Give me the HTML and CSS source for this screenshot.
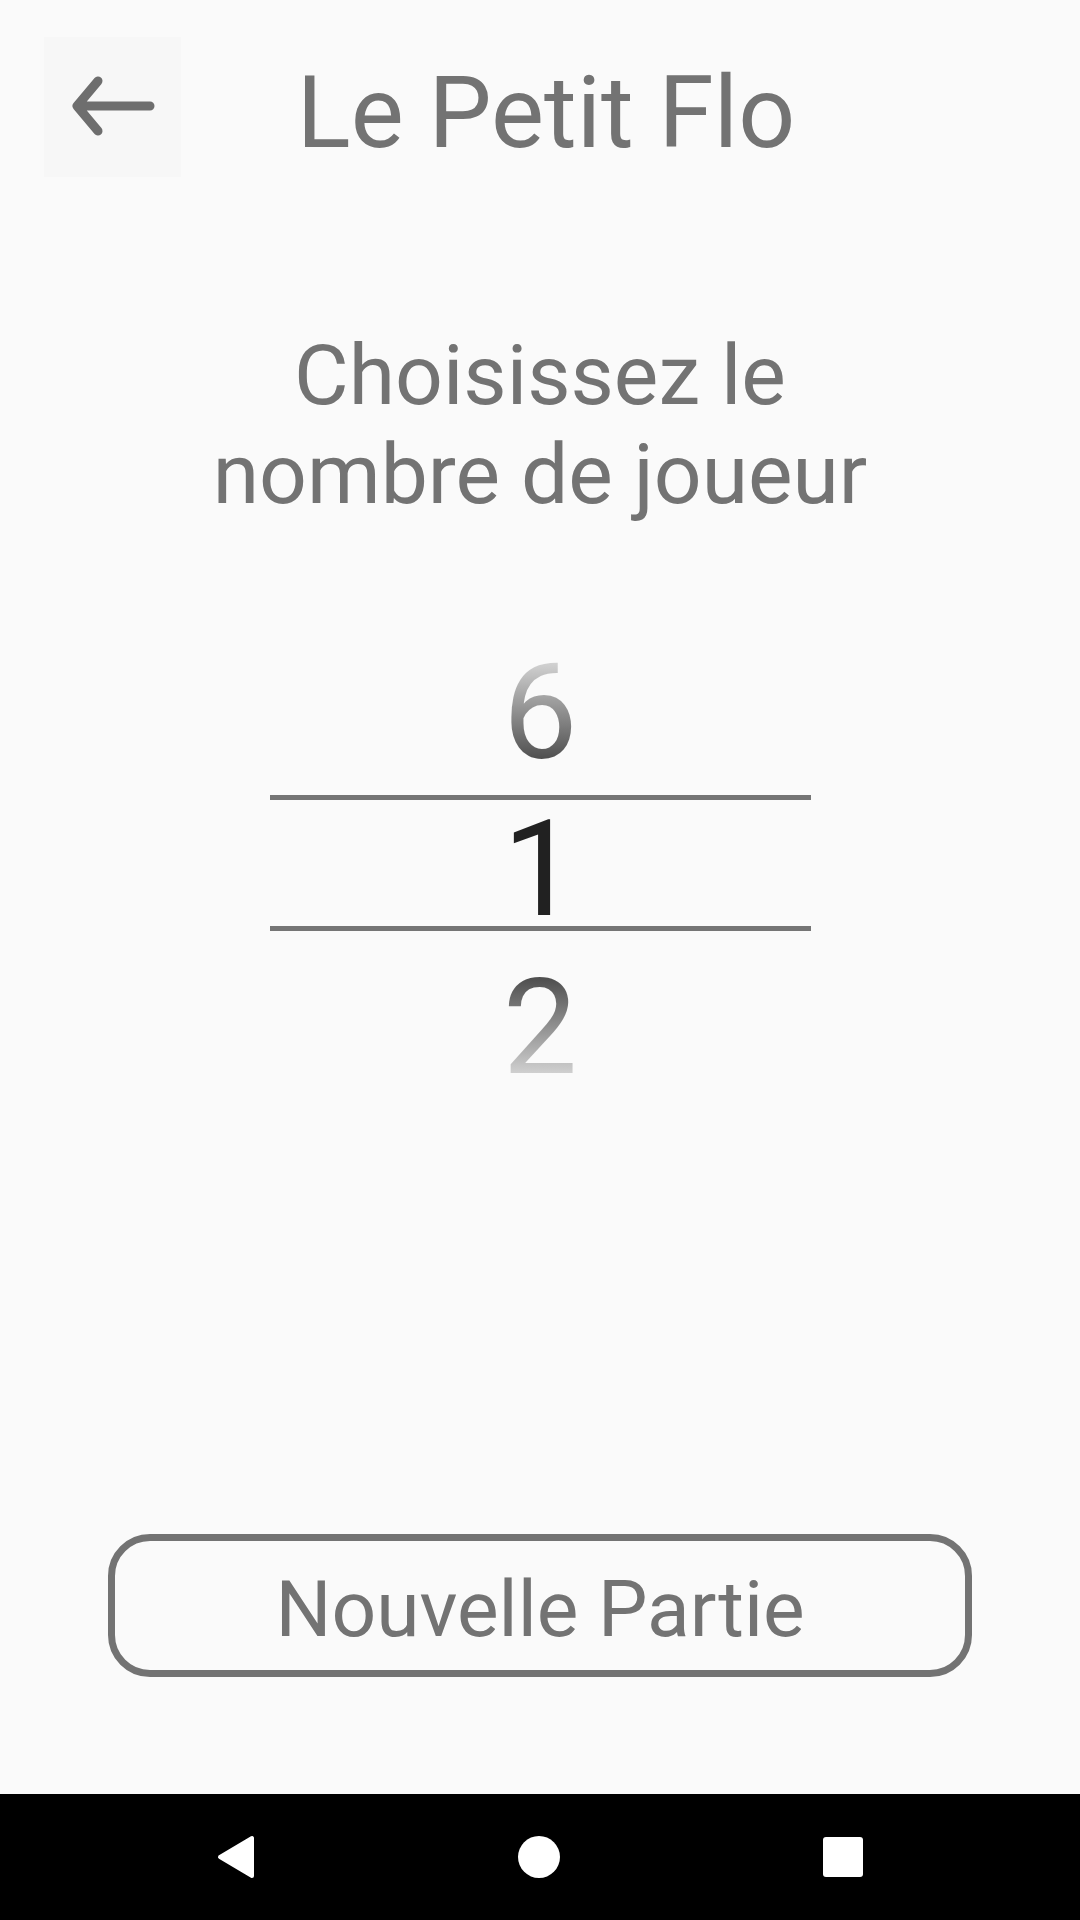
FILE: index.html
```html
<!DOCTYPE html>
<html lang="fr">
<head>
<meta charset="utf-8">
<title>Le Petit Flo</title>
<link rel="stylesheet" href="styles.css">
</head>
<body>
<div class="screen">
  <header class="toolbar">
    <button class="back" aria-label="Retour">
      <svg width="137" height="140" viewBox="0 0 137 140">
        <path d="M54 44 L33 69 L54 94 M33 69 H106" fill="none" stroke="#6e6e6e" stroke-width="9" stroke-linecap="round" stroke-linejoin="round"/>
      </svg>
    </button>
    <h1 class="title">Le Petit Flo</h1>
  </header>

  <main class="content">
    <p class="prompt">Choisissez le<br>nombre de joueur</p>

    <div class="picker">
      <div class="pick pick-prev"><span class="fade fade-top">6</span></div>
      <div class="divider"></div>
      <div class="pick pick-current">1</div>
      <div class="divider"></div>
      <div class="pick pick-next"><span class="fade fade-bottom">2</span></div>
    </div>

    <button class="new-game">Nouvelle Partie</button>
  </main>

  <nav class="navbar">
    <svg class="nav-back" width="38" height="44" viewBox="0 0 38 44">
      <polygon points="35,3 35,41 3,22" fill="#fff" stroke="#fff" stroke-width="4" stroke-linejoin="round"/>
    </svg>
    <span class="nav-home"></span>
    <span class="nav-recent"></span>
  </nav>
</div>
</body>
</html>
```

FILE: styles.css
```css
html, body {
  margin: 0;
  padding: 0;
}

body {
  background: #fafafa;
  font-family: Roboto, "Noto Sans", "Liberation Sans", sans-serif;
  color: #737373;
}

.screen {
  width: 1080px;
  height: 1920px;
  display: flex;
  flex-direction: column;
}

.toolbar {
  display: flex;
  align-items: center;
  padding: 37px 0 0 44px;
}

.back {
  width: 137px;
  height: 140px;
  padding: 0;
  border: none;
  background: #f7f7f7;
  display: flex;
  align-items: center;
  justify-content: flex-start;
}

.title {
  flex: 1;
  margin: 0 181px 0 0;
  padding: 12px 0 0 12px;
  text-align: center;
  font-weight: 400;
  font-size: 100px;
  line-height: 100px;
  color: #737373;
}

.content {
  flex: 1;
  display: flex;
  flex-direction: column;
  align-items: center;
}

.prompt {
  margin: 149px 0 0;
  text-align: center;
  font-size: 84px;
  line-height: 99px;
  color: #737373;
}

.picker {
  margin-top: 132px;
  width: 541px;
  display: flex;
  flex-direction: column;
  align-items: stretch;
  text-align: center;
  font-size: 133px;
  line-height: 113px;
}

.pick-prev {
  height: 113px;
  margin-bottom: 26px;
}

.pick-current {
  height: 113px;
  padding-top: 13px;
  color: #212121;
}

.pick-next {
  height: 113px;
  margin-top: 40px;
}

.divider {
  height: 5px;
  background: #757575;
}

.fade {
  display: inline-block;
  -webkit-background-clip: text;
  background-clip: text;
  -webkit-text-fill-color: transparent;
  color: transparent;
}

.fade-top {
  background-image: linear-gradient(to bottom, #d2d2d2 6%, #4e4e4e 92%);
}

.fade-bottom {
  background-image: linear-gradient(to bottom, #4e4e4e 6%, #d2d2d2 92%);
}

.new-game {
  margin-top: auto;
  margin-bottom: 117px;
  width: 864px;
  height: 143px;
  box-sizing: border-box;
  border: 7px solid #737373;
  border-radius: 42px;
  background: transparent;
  font-family: Roboto, "Noto Sans", "Liberation Sans", sans-serif;
  font-size: 78.5px;
  line-height: 80px;
  padding: 6px 0 0;
  color: #737373;
}

.navbar {
  height: 126px;
  background: #000;
  display: flex;
  align-items: center;
  justify-content: center;
  gap: 263px;
}

.nav-home {
  width: 42px;
  height: 42px;
  border-radius: 50%;
  background: #fff;
}

.nav-recent {
  width: 40px;
  height: 40px;
  border-radius: 3px;
  background: #fff;
}
```
